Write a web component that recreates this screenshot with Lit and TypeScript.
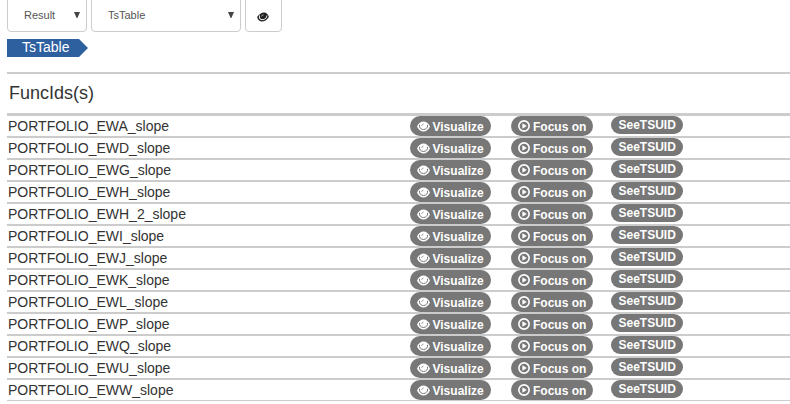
import { LitElement, html, css } from "lit";
import { customElement } from "lit/decorators.js";

const eyeIcon = html`<svg class="eye" width="13" height="11" viewBox="0 0 13 11">
  <path fill="currentColor" d="M0 5.500C1.600 2.200 4 .500 6.500 .500S11.400 2.200 13 5.500C11.400 8.800 9 10.500 6.500 10.500S1.600 8.800 0 5.500Z"/>
  <path d="M2.500 3.800C1.900 6.600 4 8.500 6.500 8.500S11.100 6.600 10.500 3.800" fill="none" stroke="var(--glint)" stroke-width="1"/>
  <path d="M4.700 4.900Q4.900 3.300 6.500 3" fill="none" stroke="var(--glint)" stroke-width=".7"/>
</svg>`;

const playIcon = html`<svg class="play" width="12" height="12" viewBox="0 0 12 12">
  <circle cx="6" cy="6" r="5.150" fill="none" stroke="currentColor" stroke-width="1.600"/>
  <path d="M4.400 3.200L8.800 6L4.400 8.800Z" fill="currentColor"/>
</svg>`;

const caret = html`<svg class="caret" width="6" height="6" viewBox="0 0 6 6"><path d="M0 0H6L3.400 6H2.600Z" fill="#444"/></svg>`;

const names = ["EWA", "EWD", "EWG", "EWH", "EWH_2", "EWI", "EWJ", "EWK", "EWL", "EWP", "EWQ", "EWU", "EWW"];

@customElement("app-root")
export class AppRoot extends LitElement {
  static styles = css`
    :host {
      display: block;
      height: 404px;
      overflow: hidden;
      background: #fff;
      color: #333;
      font-family: "Liberation Sans", Arial, sans-serif;
    }
    * { box-sizing: border-box; }
    svg { display: block; flex: none; }
    .toolbar { display: flex; gap: 4px; padding-left: 7px; height: 32px; align-items: flex-end; }
    .control {
      height: 36px;
      flex: none;
      display: flex;
      align-items: center;
      justify-content: space-between;
      border: 1px solid #ccc;
      border-radius: 4px;
      padding: 2px 6px 0 16px;
      font-size: 11px;
      color: #555;
    }
    .kind { width: 80px; }
    .name { width: 150px; }
    .view { width: 37px; padding: 0; justify-content: center; color: #222; --glint: #fff; }
    .view .eye { width: 12px; height: 10px; margin: 5px 1px 0 0; transform: skewX(-12deg); }
    .tag {
      margin: 7px 0 0 7px;
      width: 81px;
      height: 18px;
      padding-left: 15px;
      background: #2e5f9e;
      color: #fff;
      font-size: 14px;
      line-height: 17px;
      clip-path: polygon(0 0, 72px 0, 100% 50%, 72px 100%, 0 100%);
    }
    .table { margin: 15px 0 0 7px; border-top: 2px solid #ccc; }
    .head { height: 42px; padding-left: 2px; border-bottom: 3px solid #ccc; font-size: 18px; line-height: 38px; }
    .row {
      display: grid;
      grid-template-columns: 403px 101px 100px 1fr;
      align-items: start;
      height: 22px;
      border-bottom: 2px solid #ccc;
    }
    .row:last-child { height: 21px; border-bottom-width: 1px; }
    .label { padding-left: 1px; font-size: 14px; line-height: 20px; }
    .pill {
      display: flex;
      align-items: center;
      height: 20px;
      border-radius: 10px;
      background: #777;
      color: #fff;
      --glint: #777;
      font-size: 12px;
      font-weight: bold;
      line-height: 20px;
      white-space: nowrap;
      padding-left: 7px;
    }
    .pill .eye { margin-top: 1px; }
    .pill span { margin: 1px 0 0 3px; }
    .visualize { width: 81px; }
    .visualize span { margin-left: 2.500px; }
    .focus { width: 82px; }
    .pill.tsuid { width: 72px; height: 18px; line-height: 18px; padding-left: 7.500px; }
    .tsuid span { margin: 0; }
  `;

  render() {
    return html`
      <div class="toolbar">
        <div class="control kind">Result${caret}</div>
        <div class="control name">TsTable${caret}</div>
        <div class="control view">${eyeIcon}</div>
      </div>
      <div class="tag">TsTable</div>
      <div class="table">
        <div class="head">FuncIds(s)</div>
        ${names.map((n) => html`
          <div class="row">
            <div class="label">PORTFOLIO_${n}_slope</div>
            <div class="pill visualize">${eyeIcon}<span>Visualize</span></div>
            <div class="pill focus">${playIcon}<span>Focus on</span></div>
            <div class="pill tsuid"><span>SeeTSUID</span></div>
          </div>`)}
      </div>`;
  }
}
